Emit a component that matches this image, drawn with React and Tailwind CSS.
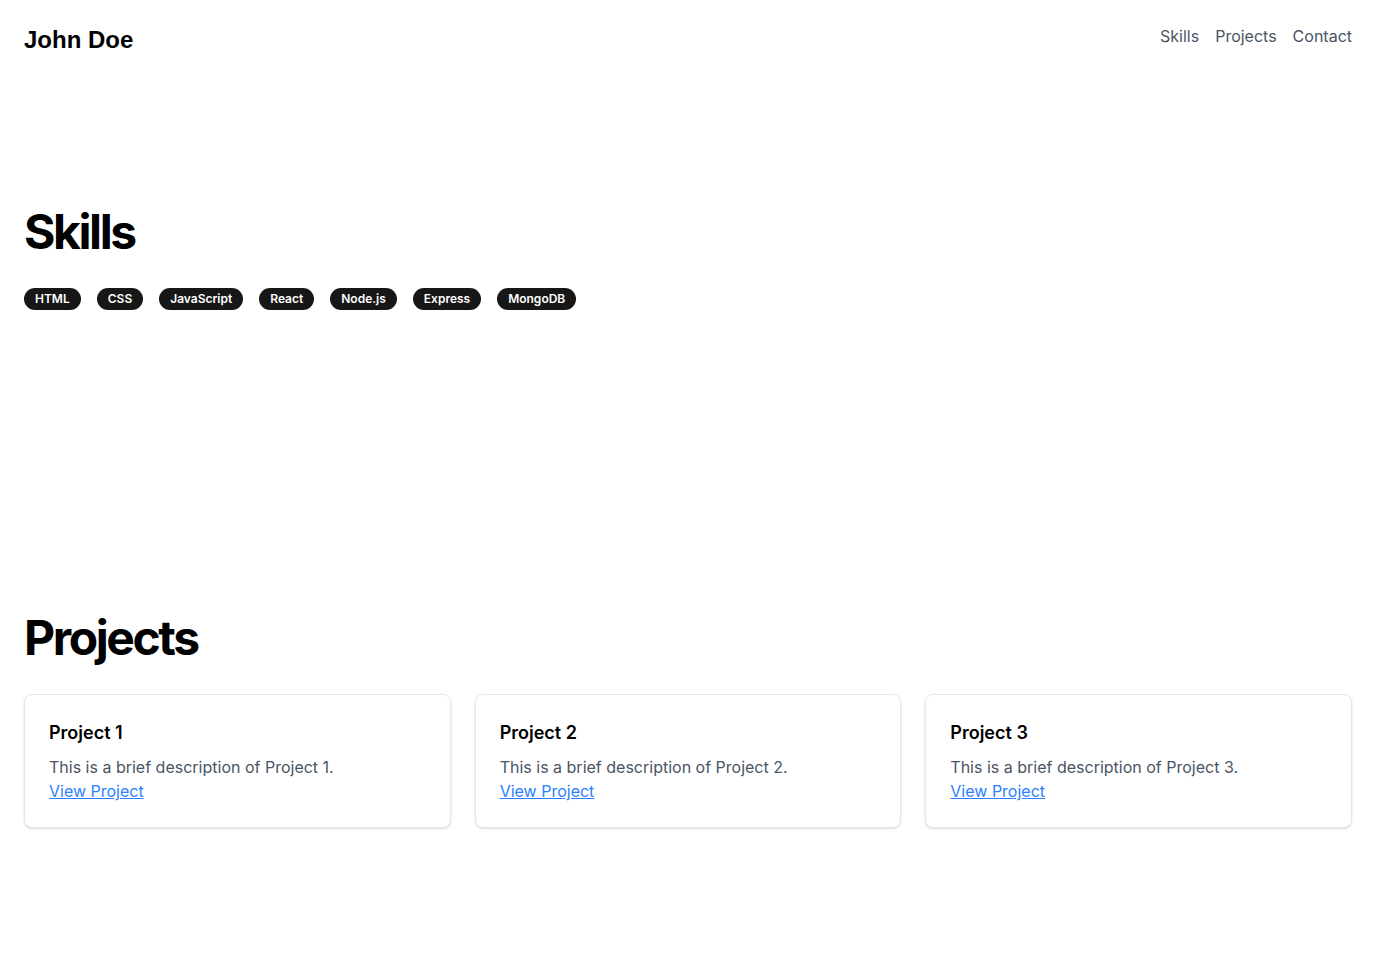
export default function App() {
  const skills = ["HTML", "CSS", "JavaScript", "React", "Node.js", "Express", "MongoDB"];
  const projects = [1, 2, 3];
  return (
    <div className="min-h-screen bg-white font-['Inter',sans-serif]">
      <header className="flex justify-between px-6 py-6">
        <div className="font-['Liberation_Sans',Arial,sans-serif] text-2xl font-bold leading-8 text-black">John Doe</div>
        <nav className="flex gap-4 text-base leading-6 text-gray-600">
          <a href="#skills">Skills</a>
          <a href="#projects">Projects</a>
          <a href="#contact">Contact</a>
        </nav>
      </header>
      <main className="px-6">
        <section id="skills" className="pt-32 pb-32">
          <h2 className="mb-8 text-5xl leading-none font-bold tracking-tighter text-black">Skills</h2>
          <div className="flex flex-wrap gap-4">
            {skills.map((s) => (
              <span key={s} className="rounded-full bg-neutral-900 px-[11px] py-[3px] text-xs leading-4 font-semibold text-white">
                {s}
              </span>
            ))}
          </div>
        </section>
        <section id="projects" className="pt-[176px] pb-32">
          <h2 className="mb-8 text-5xl leading-none font-bold tracking-tighter text-black">Projects</h2>
          <div className="grid grid-cols-3 gap-6">
            {projects.map((n) => (
              <div key={n} className="rounded-lg border border-gray-200 bg-white p-6 shadow-sm">
                <h3 className="mb-2 text-lg leading-7 font-semibold text-black">Project {n}</h3>
                <p className="text-base leading-6 text-gray-600">This is a brief description of Project {n}.</p>
                <a href="#" className="text-base leading-6 text-blue-500 underline">View Project</a>
              </div>
            ))}
          </div>
        </section>
      </main>
    </div>
  );
}
